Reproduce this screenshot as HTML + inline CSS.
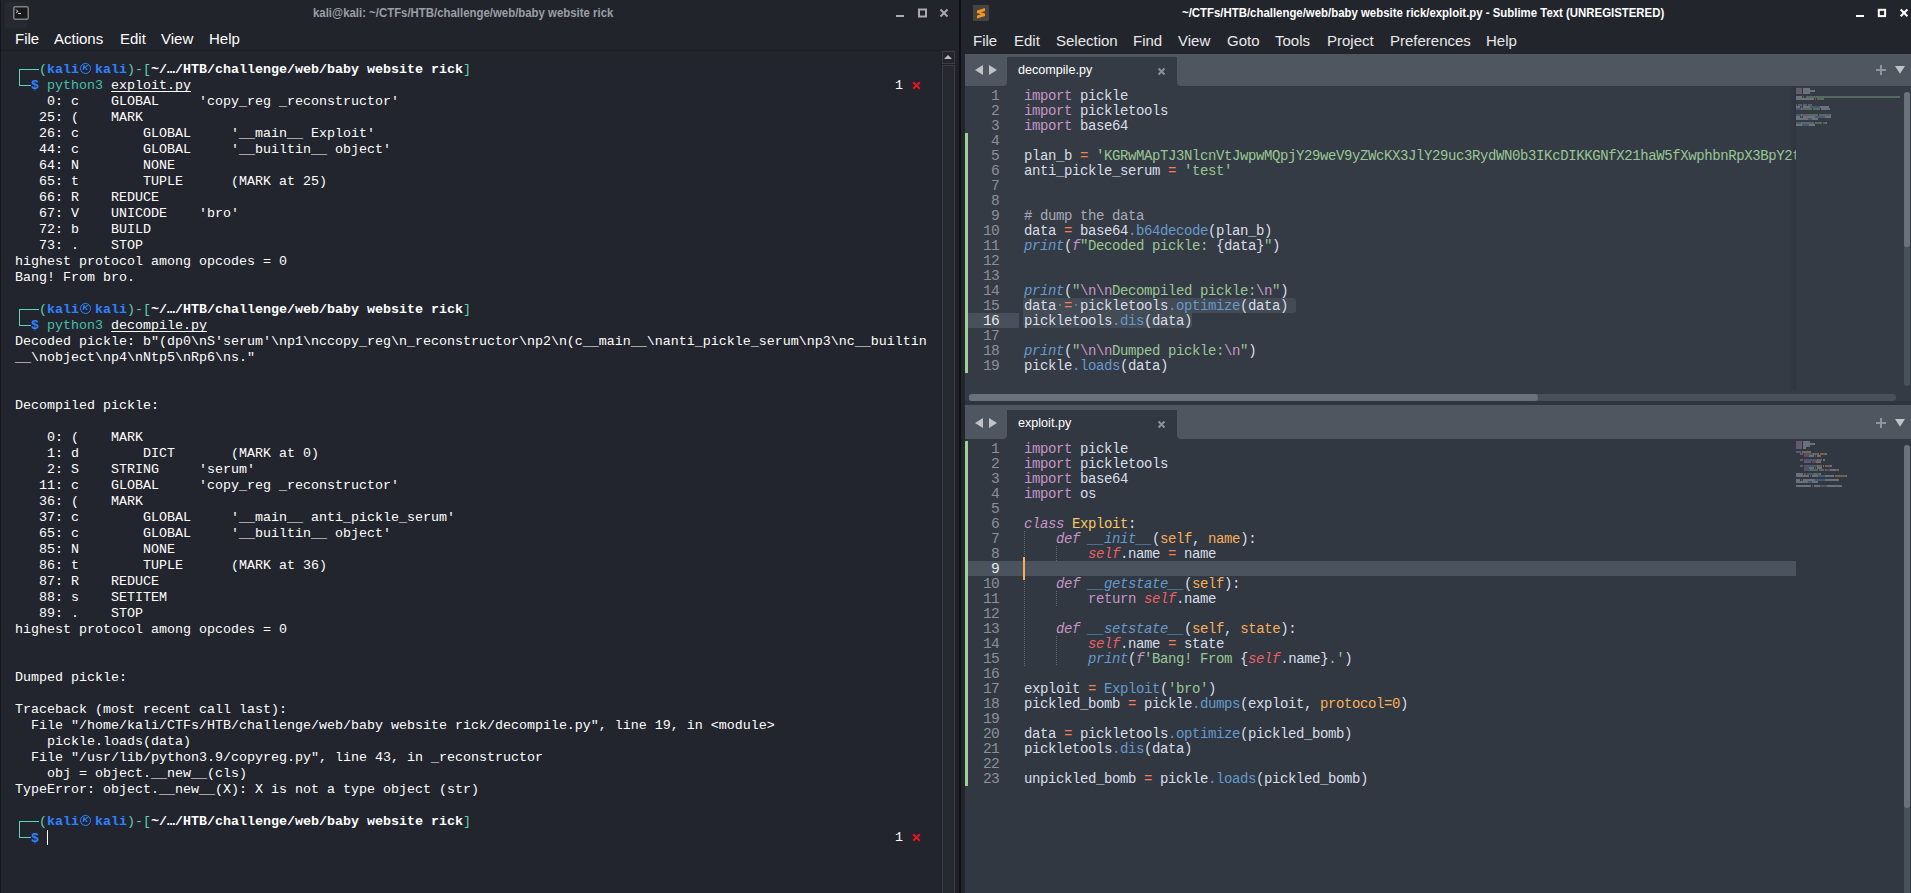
<!DOCTYPE html>
<html><head><meta charset="utf-8">
<style>
*{box-sizing:border-box}
html,body{margin:0;padding:0}
body{width:1911px;height:893px;overflow:hidden;position:relative;background:#101114;font-family:"Liberation Sans",sans-serif}
.abs{position:absolute}
/* terminal */
#term{position:absolute;left:0;top:0;width:959px;height:893px;background:#23252e}
.tl{position:absolute;left:15px;height:16px;line-height:16px;white-space:pre;font-family:"Liberation Mono",monospace;font-size:13.33px;color:#fff}
.tl b{font-weight:bold}
.rp{left:895px}
.tl u{text-decoration:underline;text-underline-offset:1.5px;text-decoration-skip-ink:none}
.ko{display:inline-block;width:16px;height:16px;vertical-align:top;position:relative}
.ko::before{content:"";box-sizing:border-box;position:absolute;left:0.5px;top:0.5px;width:11.8px;height:11.8px;border:1.6px solid #2f82ff;border-radius:50%}
.ko::after{content:"K";position:absolute;left:3.4px;top:1.2px;font-size:8px;line-height:10px;color:#2f82ff;font-family:"Liberation Sans",sans-serif;font-weight:bold}
.bx{position:absolute;background:#5ed6b2}
.cur{display:inline-block;width:1px;height:15px;background:#fff;vertical-align:-3px}
.mi{position:absolute;font-size:15px;color:#fff;top:30px;line-height:18px}
.wt{position:absolute;font-weight:bold;font-size:13px;line-height:16px;top:5px;white-space:pre;transform:scaleX(0.877);transform-origin:0 0}
/* sublime */
.tabt{position:absolute;left:1018px;font-size:12.6px;color:#fff;line-height:16px}
.ln{position:absolute;left:965px;width:34px;text-align:right;font-family:"Liberation Mono",monospace;font-size:14.6px;letter-spacing:-0.75px;line-height:15px;height:15px;color:#8a9099;margin-top:1px}
.ln.hl{color:#e6e9ee}
.cl{position:absolute;left:1024px;white-space:pre;font-family:"Liberation Mono",monospace;font-size:14px;letter-spacing:-0.4px;line-height:15px;height:15px;color:#d8dee9;margin-top:1px}
.kw{color:#c695c6}.kwi{color:#c695c6;font-style:italic}.op{color:#f97b58}.st{color:#99c794}.fn{color:#6699cc}.fni{color:#6699cc;font-style:italic}.cm{color:#a6acb9}
.sf{color:#ec5f66;font-style:italic}.pa{color:#f9ae58}.cn{color:#fac761}.es{color:#c695c6}
.clip{position:absolute;overflow:hidden}
.mm i{position:absolute;height:2px;opacity:0.34}
.guide{position:absolute;width:1px;background-image:linear-gradient(#5f6771 50%,transparent 50%);background-size:1px 2px}
</style></head><body>
<!-- ================= TERMINAL ================= -->
<div id="term">
  <div class="abs" style="left:0;top:0;width:959px;height:50px;background:#22242c"></div>
  <div class="abs" style="left:0;top:50px;width:941px;height:1px;background:#1c1e24"></div>
  <div class="abs" style="left:0;top:0;width:1px;height:893px;background:#15161a"></div>
  <!-- icon -->
  <div class="abs" style="left:5px;top:2px;width:22px;height:26px;background:#272931;border-radius:3px"></div>
  <svg class="abs" style="left:13px;top:6px" width="16" height="14" viewBox="0 0 16 14">
    <rect x="0.75" y="0.75" width="14.5" height="12.5" rx="1.5" fill="#1a1a1a" stroke="#808080" stroke-width="1.5"/>
    <path d="M3 3.5L5 5.5L3 6.5M5 7.5H8" stroke="#dcdcdc" stroke-width="1" fill="none"/>
  </svg>
  <div class="wt" style="left:313px;color:#9a9ea6">kali@kali: ~/CTFs/HTB/challenge/web/baby website rick</div>
  <!-- window buttons -->
  <svg class="abs" style="left:890px;top:4px" width="64" height="18" viewBox="0 0 64 18">
    <rect x="6" y="11" width="8" height="2" fill="#ababab"/>
    <rect x="29" y="5.5" width="7" height="7" fill="none" stroke="#ababab" stroke-width="2"/>
    <path d="M50.5 5.5L57.5 12.5M57.5 5.5L50.5 12.5" stroke="#ababab" stroke-width="2"/>
  </svg>
  <div class="mi" style="left:15px">File</div>
  <div class="mi" style="left:54px">Actions</div>
  <div class="mi" style="left:120px">Edit</div>
  <div class="mi" style="left:161px">View</div>
  <div class="mi" style="left:209px">Help</div>
  <!-- scrollbar -->
  <div class="abs" style="left:941px;top:51px;width:18px;height:842px;background:#202228"></div>
  <div class="abs" style="left:942px;top:51px;width:13px;height:13px;border:1px solid #3a3d45;background:#23252c"></div>
  <div class="abs" style="left:944px;top:55px;width:0;height:0;border-left:4px solid transparent;border-right:4px solid transparent;border-bottom:4px solid #bcbcbc"></div>
  <div class="abs" style="left:942px;top:65px;width:13px;height:840px;border:1px solid #3a3d45;background:#262930"></div>
<div class="bx" style="left:19px;top:69px;width:20px;height:1px"></div><div class="bx" style="left:19px;top:69px;width:1px;height:17px"></div><div class="bx" style="left:19px;top:85px;width:12px;height:1px"></div><div class="bx" style="left:19px;top:309px;width:20px;height:1px"></div><div class="bx" style="left:19px;top:309px;width:1px;height:17px"></div><div class="bx" style="left:19px;top:325px;width:12px;height:1px"></div><div class="bx" style="left:19px;top:821px;width:20px;height:1px"></div><div class="bx" style="left:19px;top:821px;width:1px;height:17px"></div><div class="bx" style="left:19px;top:837px;width:12px;height:1px"></div><div class="tl" style="top:62px"><span style="color:#5ad2ac">   (</span><b style="color:#2f82ff">kali<i class="ko"></i>kali</b><span style="color:#5ad2ac">)-[</span><b style="color:#ffffff">~/…/HTB/challenge/web/baby website rick</b><span style="color:#5ad2ac">]</span></div>
<div class="tl" style="top:78px"><span style="color:#5ad2ac">  </span><b style="color:#2f82ff">$</b> <span style="color:#47bfac">python3</span> <u>exploit.py</u></div>
<div class="tl" style="top:94px">    0: c    GLOBAL     &#x27;copy_reg _reconstructor&#x27;</div>
<div class="tl" style="top:110px">   25: (    MARK</div>
<div class="tl" style="top:126px">   26: c        GLOBAL     &#x27;__main__ Exploit&#x27;</div>
<div class="tl" style="top:142px">   44: c        GLOBAL     &#x27;__builtin__ object&#x27;</div>
<div class="tl" style="top:158px">   64: N        NONE</div>
<div class="tl" style="top:174px">   65: t        TUPLE      (MARK at 25)</div>
<div class="tl" style="top:190px">   66: R    REDUCE</div>
<div class="tl" style="top:206px">   67: V    UNICODE    &#x27;bro&#x27;</div>
<div class="tl" style="top:222px">   72: b    BUILD</div>
<div class="tl" style="top:238px">   73: .    STOP</div>
<div class="tl" style="top:254px">highest protocol among opcodes = 0</div>
<div class="tl" style="top:270px">Bang! From bro.</div>
<div class="tl" style="top:302px"><span style="color:#5ad2ac">   (</span><b style="color:#2f82ff">kali<i class="ko"></i>kali</b><span style="color:#5ad2ac">)-[</span><b style="color:#ffffff">~/…/HTB/challenge/web/baby website rick</b><span style="color:#5ad2ac">]</span></div>
<div class="tl" style="top:318px"><span style="color:#5ad2ac">  </span><b style="color:#2f82ff">$</b> <span style="color:#47bfac">python3</span> <u>decompile.py</u></div>
<div class="tl" style="top:334px">Decoded pickle: b&quot;(dp0\nS&#x27;serum&#x27;\np1\nccopy_reg\n_reconstructor\np2\n(c__main__\nanti_pickle_serum\np3\nc__builtin</div>
<div class="tl" style="top:350px">__\nobject\np4\nNtp5\nRp6\ns.&quot;</div>
<div class="tl" style="top:398px">Decompiled pickle:</div>
<div class="tl" style="top:430px">    0: (    MARK</div>
<div class="tl" style="top:446px">    1: d        DICT       (MARK at 0)</div>
<div class="tl" style="top:462px">    2: S    STRING     &#x27;serum&#x27;</div>
<div class="tl" style="top:478px">   11: c    GLOBAL     &#x27;copy_reg _reconstructor&#x27;</div>
<div class="tl" style="top:494px">   36: (    MARK</div>
<div class="tl" style="top:510px">   37: c        GLOBAL     &#x27;__main__ anti_pickle_serum&#x27;</div>
<div class="tl" style="top:526px">   65: c        GLOBAL     &#x27;__builtin__ object&#x27;</div>
<div class="tl" style="top:542px">   85: N        NONE</div>
<div class="tl" style="top:558px">   86: t        TUPLE      (MARK at 36)</div>
<div class="tl" style="top:574px">   87: R    REDUCE</div>
<div class="tl" style="top:590px">   88: s    SETITEM</div>
<div class="tl" style="top:606px">   89: .    STOP</div>
<div class="tl" style="top:622px">highest protocol among opcodes = 0</div>
<div class="tl" style="top:670px">Dumped pickle:</div>
<div class="tl" style="top:702px">Traceback (most recent call last):</div>
<div class="tl" style="top:718px">  File &quot;/home/kali/CTFs/HTB/challenge/web/baby website rick/decompile.py&quot;, line 19, in &lt;module&gt;</div>
<div class="tl" style="top:734px">    pickle.loads(data)</div>
<div class="tl" style="top:750px">  File &quot;/usr/lib/python3.9/copyreg.py&quot;, line 43, in _reconstructor</div>
<div class="tl" style="top:766px">    obj = object.__new__(cls)</div>
<div class="tl" style="top:782px">TypeError: object.__new__(X): X is not a type object (str)</div>
<div class="tl" style="top:814px"><span style="color:#5ad2ac">   (</span><b style="color:#2f82ff">kali<i class="ko"></i>kali</b><span style="color:#5ad2ac">)-[</span><b style="color:#ffffff">~/…/HTB/challenge/web/baby website rick</b><span style="color:#5ad2ac">]</span></div>
<div class="tl" style="top:830px"><span style="color:#5ad2ac">  </span><b style="color:#2f82ff">$</b> <i class="cur"></i></div><div class="tl rp" style="top:78px"><span style="color:#fff">1</span></div><svg class="abs" style="left:912px;top:81px" width="9" height="9" viewBox="0 0 9 9"><path d="M1.2 1.2L7.8 7.8M7.8 1.2L1.2 7.8" stroke="#e8141c" stroke-width="2"/></svg><div class="tl rp" style="top:830px"><span style="color:#fff">1</span></div><svg class="abs" style="left:912px;top:833px" width="9" height="9" viewBox="0 0 9 9"><path d="M1.2 1.2L7.8 7.8M7.8 1.2L1.2 7.8" stroke="#e8141c" stroke-width="2"/></svg>
</div>
<div class="abs" style="left:959px;top:0;width:2px;height:893px;background:#0f1013"></div>

<!-- ================= SUBLIME ================= -->
<div class="abs" style="left:961px;top:0;width:950px;height:893px;background:#23252d"></div>
<div class="abs" style="left:973px;top:5px;width:16px;height:16px;background:#444444;border-radius:1px"></div>
<svg class="abs" style="left:973px;top:5px" width="16" height="16" viewBox="0 0 16 16">
  <path d="M4 5.5L12 3V6L8 7.3L12 8.5V11L4 13.5V10.5L8 9.2L4 8Z" fill="#f7941d"/>
</svg>
<div class="wt" style="left:1182px;color:#ffffff">~/CTFs/HTB/challenge/web/baby website rick/exploit.py - Sublime Text (UNREGISTERED)</div>
<svg class="abs" style="left:1850px;top:4px" width="61" height="18" viewBox="0 0 61 18">
  <rect x="6" y="11" width="8" height="2" fill="#fff"/>
  <rect x="28.8" y="5.8" width="6.3" height="6.3" fill="none" stroke="#fff" stroke-width="2"/>
  <path d="M50.7 5.6L57.4 12.3M57.4 5.6L50.7 12.3" stroke="#fff" stroke-width="2.1"/>
</svg>
<div class="mi" style="left:973px;top:32px;color:#e8e8e8">File</div>
<div class="mi" style="left:1014px;top:32px;color:#e8e8e8">Edit</div>
<div class="mi" style="left:1056px;top:32px;color:#e8e8e8">Selection</div>
<div class="mi" style="left:1133px;top:32px;color:#e8e8e8">Find</div>
<div class="mi" style="left:1178px;top:32px;color:#e8e8e8">View</div>
<div class="mi" style="left:1227px;top:32px;color:#e8e8e8">Goto</div>
<div class="mi" style="left:1275px;top:32px;color:#e8e8e8">Tools</div>
<div class="mi" style="left:1327px;top:32px;color:#e8e8e8">Project</div>
<div class="mi" style="left:1390px;top:32px;color:#e8e8e8">Preferences</div>
<div class="mi" style="left:1486px;top:32px;color:#e8e8e8">Help</div>

<!-- ---------- pane 1 ---------- -->
<div class="abs" style="left:965px;top:54px;width:946px;height:351px;background:#353b45"></div>
<div class="abs" style="left:965px;top:54px;width:42px;height:32px;background:#4f565f;border-bottom-right-radius:4px"></div>
<div class="abs" style="left:1177px;top:54px;width:734px;height:32px;background:#4f565f;border-bottom-left-radius:4px"></div>
<div class="abs" style="left:1007px;top:54px;width:170px;height:3px;background:#4f565f"></div>
<div class="abs" style="left:1007px;top:57px;width:170px;height:29px;background:#353b45;border-radius:5px 5px 0 0"></div>
<svg class="abs" style="left:965px;top:54px" width="946" height="32" viewBox="0 0 946 32">
  <path d="M10 16L18 11V21Z" fill="#c0c3c7"/>
  <path d="M24 11L32 16L24 21Z" fill="#c0c3c7"/>
  <path d="M193.5 14.5L199.5 20.5M199.5 14.5L193.5 20.5" stroke="#8a9098" stroke-width="2"/>
  <path d="M916 11V21M911 16H921" stroke="#8f959c" stroke-width="2"/>
  <path d="M930 12H940L935 19.8Z" fill="#c0c3c7"/>
</svg>
<div class="tabt" style="top:62px">decompile.py</div>
<!-- selection & highlights -->
<div class="abs" style="left:968px;top:313px;width:51px;height:15px;background:#48515b"></div>
<div class="abs" style="left:1023px;top:298px;width:273px;height:15px;background:#434b55;border-radius:3px 3px 3px 0"></div>
<div class="abs" style="left:1023px;top:313px;width:169px;height:15px;background:#434b55;border-radius:0 0 3px 3px"></div>
<div class="abs" style="left:965px;top:133px;width:3px;height:240px;background:#9fcf95"></div>
<div class="abs" style="left:1059px;top:304px;width:2px;height:2px;background:#6a737e"></div>
<div class="abs" style="left:1075px;top:304px;width:2px;height:2px;background:#6a737e"></div>
<div class="clip" style="left:965px;top:86px;width:831px;height:305px">
  <div class="abs" style="left:-965px;top:-86px;width:1911px;height:893px">
<div class="ln" style="top:88px">1</div>
<div class="cl" style="top:88px"><span class="kw">import</span> pickle</div>
<div class="ln" style="top:103px">2</div>
<div class="cl" style="top:103px"><span class="kw">import</span> pickletools</div>
<div class="ln" style="top:118px">3</div>
<div class="cl" style="top:118px"><span class="kw">import</span> base64</div>
<div class="ln" style="top:133px">4</div>
<div class="ln" style="top:148px">5</div>
<div class="cl" style="top:148px">plan_b <span class="op">=</span> <span class="st">&#x27;KGRwMApTJ3NlcnVtJwpwMQpjY29weV9yZWcKX3JlY29uc3RydWN0b3IKcDIKKGNfX21haW5fXwphbnRpX3BpY2tsZV9zZXJ1bQpwMwpjX19idWlsdGluX18Kb2JqZWN0CnA0Ck50cDUKUnA2CnMu&#x27;</span></div>
<div class="ln" style="top:163px">6</div>
<div class="cl" style="top:163px">anti_pickle_serum <span class="op">=</span> <span class="st">&#x27;test&#x27;</span></div>
<div class="ln" style="top:178px">7</div>
<div class="ln" style="top:193px">8</div>
<div class="ln" style="top:208px">9</div>
<div class="cl" style="top:208px"><span class="cm"># dump the data</span></div>
<div class="ln" style="top:223px">10</div>
<div class="cl" style="top:223px">data <span class="op">=</span> base64<span class="fn">.b64decode</span>(plan_b)</div>
<div class="ln" style="top:238px">11</div>
<div class="cl" style="top:238px"><span class="fni">print</span>(<span class="kwi">f</span><span class="st">&quot;Decoded pickle: </span>{data}<span class="st">&quot;</span>)</div>
<div class="ln" style="top:253px">12</div>
<div class="ln" style="top:268px">13</div>
<div class="ln" style="top:283px">14</div>
<div class="cl" style="top:283px"><span class="fni">print</span>(<span class="st">&quot;</span><span class="es">\n\n</span><span class="st">Decompiled pickle:</span><span class="es">\n</span><span class="st">&quot;</span>)</div>
<div class="ln" style="top:298px">15</div>
<div class="cl" style="top:298px">data <span class="op">=</span> pickletools<span class="fn">.optimize</span>(data)</div>
<div class="ln hl" style="top:313px">16</div>
<div class="cl" style="top:313px">pickletools<span class="fn">.dis</span>(data)</div>
<div class="ln" style="top:328px">17</div>
<div class="ln" style="top:343px">18</div>
<div class="cl" style="top:343px"><span class="fni">print</span>(<span class="st">&quot;</span><span class="es">\n\n</span><span class="st">Dumped pickle:</span><span class="es">\n</span><span class="st">&quot;</span>)</div>
<div class="ln" style="top:358px">19</div>
<div class="cl" style="top:358px">pickle<span class="fn">.loads</span>(data)</div>
  </div>
</div>
<div class="abs" style="left:1790px;top:86px;width:6px;height:304px;background:linear-gradient(90deg,rgba(0,0,0,0.02),rgba(0,0,0,0.12))"></div>
<div class="mm"><i style="left:1796.00px;top:88px;width:6.36px;background:#c695c6"></i><i style="left:1803.42px;top:88px;width:6.36px;background:#d8dee9"></i><i style="left:1796.00px;top:90px;width:6.36px;background:#c695c6"></i><i style="left:1803.42px;top:90px;width:11.66px;background:#d8dee9"></i><i style="left:1796.00px;top:92px;width:6.36px;background:#c695c6"></i><i style="left:1803.42px;top:92px;width:6.36px;background:#d8dee9"></i><i style="left:1796.00px;top:96px;width:6.36px;background:#d8dee9"></i><i style="left:1803.42px;top:96px;width:1.06px;background:#f97b58"></i><i style="left:1805.54px;top:96px;width:94.46px;background:#99c794"></i><i style="left:1796.00px;top:98px;width:18.02px;background:#d8dee9"></i><i style="left:1815.08px;top:98px;width:1.06px;background:#f97b58"></i><i style="left:1817.20px;top:98px;width:6.36px;background:#99c794"></i><i style="left:1796.00px;top:104px;width:1.06px;background:#a6acb9"></i><i style="left:1798.12px;top:104px;width:4.24px;background:#a6acb9"></i><i style="left:1803.42px;top:104px;width:3.18px;background:#a6acb9"></i><i style="left:1807.66px;top:104px;width:4.24px;background:#a6acb9"></i><i style="left:1796.00px;top:106px;width:4.24px;background:#d8dee9"></i><i style="left:1801.30px;top:106px;width:1.06px;background:#f97b58"></i><i style="left:1803.42px;top:106px;width:6.36px;background:#d8dee9"></i><i style="left:1809.78px;top:106px;width:10.60px;background:#6699cc"></i><i style="left:1820.38px;top:106px;width:8.48px;background:#d8dee9"></i><i style="left:1796.00px;top:108px;width:5.30px;background:#6699cc"></i><i style="left:1801.30px;top:108px;width:1.06px;background:#d8dee9"></i><i style="left:1802.36px;top:108px;width:1.06px;background:#c695c6"></i><i style="left:1803.42px;top:108px;width:8.48px;background:#99c794"></i><i style="left:1812.96px;top:108px;width:7.42px;background:#99c794"></i><i style="left:1821.44px;top:108px;width:6.36px;background:#d8dee9"></i><i style="left:1827.80px;top:108px;width:1.06px;background:#99c794"></i><i style="left:1828.86px;top:108px;width:1.06px;background:#d8dee9"></i><i style="left:1796.00px;top:114px;width:5.30px;background:#6699cc"></i><i style="left:1801.30px;top:114px;width:1.06px;background:#d8dee9"></i><i style="left:1802.36px;top:114px;width:1.06px;background:#99c794"></i><i style="left:1803.42px;top:114px;width:4.24px;background:#c695c6"></i><i style="left:1807.66px;top:114px;width:10.60px;background:#99c794"></i><i style="left:1819.32px;top:114px;width:7.42px;background:#99c794"></i><i style="left:1826.74px;top:114px;width:2.12px;background:#c695c6"></i><i style="left:1828.86px;top:114px;width:1.06px;background:#99c794"></i><i style="left:1829.92px;top:114px;width:1.06px;background:#d8dee9"></i><i style="left:1796.00px;top:116px;width:4.24px;background:#d8dee9"></i><i style="left:1801.30px;top:116px;width:1.06px;background:#f97b58"></i><i style="left:1803.42px;top:116px;width:11.66px;background:#d8dee9"></i><i style="left:1815.08px;top:116px;width:9.54px;background:#6699cc"></i><i style="left:1824.62px;top:116px;width:6.36px;background:#d8dee9"></i><i style="left:1796.00px;top:118px;width:11.66px;background:#d8dee9"></i><i style="left:1807.66px;top:118px;width:4.24px;background:#6699cc"></i><i style="left:1811.90px;top:118px;width:6.36px;background:#d8dee9"></i><i style="left:1796.00px;top:122px;width:5.30px;background:#6699cc"></i><i style="left:1801.30px;top:122px;width:1.06px;background:#d8dee9"></i><i style="left:1802.36px;top:122px;width:1.06px;background:#99c794"></i><i style="left:1803.42px;top:122px;width:4.24px;background:#c695c6"></i><i style="left:1807.66px;top:122px;width:6.36px;background:#99c794"></i><i style="left:1815.08px;top:122px;width:7.42px;background:#99c794"></i><i style="left:1822.50px;top:122px;width:2.12px;background:#c695c6"></i><i style="left:1824.62px;top:122px;width:1.06px;background:#99c794"></i><i style="left:1825.68px;top:122px;width:1.06px;background:#d8dee9"></i><i style="left:1796.00px;top:124px;width:6.36px;background:#d8dee9"></i><i style="left:1802.36px;top:124px;width:6.36px;background:#6699cc"></i><i style="left:1808.72px;top:124px;width:6.36px;background:#d8dee9"></i></div>
<div class="abs" style="left:1904px;top:92px;width:6px;height:294px;background:#48505a;border-radius:3px"></div>
<div class="abs" style="left:1904px;top:92px;width:6px;height:155px;background:#6b727b;border-radius:3px"></div>
<div class="abs" style="left:969px;top:394px;width:927px;height:7px;background:#48505a;border-radius:3px"></div>
<div class="abs" style="left:969px;top:394px;width:569px;height:7px;background:#6b717b;border-radius:3px"></div>
<div class="abs" style="left:965px;top:401px;width:946px;height:4px;background:#2f353e"></div>

<!-- ---------- pane 2 ---------- -->
<div class="abs" style="left:965px;top:405px;width:946px;height:488px;background:#313842"></div>
<div class="abs" style="left:965px;top:405px;width:42px;height:34px;background:#4f565f;border-bottom-right-radius:4px"></div>
<div class="abs" style="left:1177px;top:405px;width:734px;height:34px;background:#4f565f;border-bottom-left-radius:4px"></div>
<div class="abs" style="left:1007px;top:405px;width:170px;height:5px;background:#4f565f"></div>
<div class="abs" style="left:1007px;top:410px;width:170px;height:29px;background:#313842;border-radius:5px 5px 0 0"></div>
<svg class="abs" style="left:965px;top:407px" width="946" height="32" viewBox="0 0 946 32">
  <path d="M10 16L18 11V21Z" fill="#c0c3c7"/>
  <path d="M24 11L32 16L24 21Z" fill="#c0c3c7"/>
  <path d="M193.5 14.5L199.5 20.5M199.5 14.5L193.5 20.5" stroke="#8a9098" stroke-width="2"/>
  <path d="M916 11V21M911 16H921" stroke="#8f959c" stroke-width="2"/>
  <path d="M930 12H940L935 19.8Z" fill="#c0c3c7"/>
</svg>
<div class="tabt" style="top:415px">exploit.py</div>
<div class="abs" style="left:968px;top:561px;width:828px;height:15px;background:#4a535e"></div>
<div class="abs" style="left:965px;top:441px;width:3px;height:345px;background:#9fcf95"></div>
<div class="guide" style="left:1024px;top:531px;height:135px"></div>
<div class="guide" style="left:1056px;top:546px;height:15px"></div>
<div class="guide" style="left:1056px;top:591px;height:15px"></div>
<div class="guide" style="left:1056px;top:636px;height:30px"></div>
<div class="clip" style="left:965px;top:439px;width:831px;height:454px">
  <div class="abs" style="left:-965px;top:-439px;width:1911px;height:893px">
<div class="ln" style="top:441px">1</div>
<div class="cl" style="top:441px"><span class="kw">import</span> pickle</div>
<div class="ln" style="top:456px">2</div>
<div class="cl" style="top:456px"><span class="kw">import</span> pickletools</div>
<div class="ln" style="top:471px">3</div>
<div class="cl" style="top:471px"><span class="kw">import</span> base64</div>
<div class="ln" style="top:486px">4</div>
<div class="cl" style="top:486px"><span class="kw">import</span> os</div>
<div class="ln" style="top:501px">5</div>
<div class="ln" style="top:516px">6</div>
<div class="cl" style="top:516px"><span class="kwi">class</span> <span class="cn">Exploit</span>:</div>
<div class="ln" style="top:531px">7</div>
<div class="cl" style="top:531px">    <span class="kwi">def</span> <span class="fni">__init__</span>(<span class="pa">self</span>, <span class="pa">name</span>):</div>
<div class="ln" style="top:546px">8</div>
<div class="cl" style="top:546px">        <span class="sf">self</span>.name <span class="op">=</span> name</div>
<div class="ln hl" style="top:561px">9</div>
<div class="ln" style="top:576px">10</div>
<div class="cl" style="top:576px">    <span class="kwi">def</span> <span class="fni">__getstate__</span>(<span class="pa">self</span>):</div>
<div class="ln" style="top:591px">11</div>
<div class="cl" style="top:591px">        <span class="kw">return</span> <span class="sf">self</span>.name</div>
<div class="ln" style="top:606px">12</div>
<div class="ln" style="top:621px">13</div>
<div class="cl" style="top:621px">    <span class="kwi">def</span> <span class="fni">__setstate__</span>(<span class="pa">self</span>, <span class="pa">state</span>):</div>
<div class="ln" style="top:636px">14</div>
<div class="cl" style="top:636px">        <span class="sf">self</span>.name <span class="op">=</span> state</div>
<div class="ln" style="top:651px">15</div>
<div class="cl" style="top:651px">        <span class="fni">print</span>(<span class="kwi">f</span><span class="st">&#x27;Bang! From </span>{<span class="sf">self</span>.name}<span class="st">.&#x27;</span>)</div>
<div class="ln" style="top:666px">16</div>
<div class="ln" style="top:681px">17</div>
<div class="cl" style="top:681px">exploit <span class="op">=</span> <span class="fn">Exploit</span>(<span class="st">&#x27;bro&#x27;</span>)</div>
<div class="ln" style="top:696px">18</div>
<div class="cl" style="top:696px">pickled_bomb <span class="op">=</span> pickle<span class="fn">.dumps</span>(exploit, <span class="pa">protocol=0</span>)</div>
<div class="ln" style="top:711px">19</div>
<div class="ln" style="top:726px">20</div>
<div class="cl" style="top:726px">data <span class="op">=</span> pickletools<span class="fn">.optimize</span>(pickled_bomb)</div>
<div class="ln" style="top:741px">21</div>
<div class="cl" style="top:741px">pickletools<span class="fn">.dis</span>(data)</div>
<div class="ln" style="top:756px">22</div>
<div class="ln" style="top:771px">23</div>
<div class="cl" style="top:771px">unpickled_bomb <span class="op">=</span> pickle<span class="fn">.loads</span>(pickled_bomb)</div>
  </div>
</div>
<div class="abs" style="left:1023px;top:557px;width:2px;height:23px;background:#f9ae58"></div>
<div class="mm"><i style="left:1796.00px;top:441px;width:6.36px;background:#c695c6"></i><i style="left:1803.42px;top:441px;width:6.36px;background:#d8dee9"></i><i style="left:1796.00px;top:443px;width:6.36px;background:#c695c6"></i><i style="left:1803.42px;top:443px;width:11.66px;background:#d8dee9"></i><i style="left:1796.00px;top:445px;width:6.36px;background:#c695c6"></i><i style="left:1803.42px;top:445px;width:6.36px;background:#d8dee9"></i><i style="left:1796.00px;top:447px;width:6.36px;background:#c695c6"></i><i style="left:1803.42px;top:447px;width:2.12px;background:#d8dee9"></i><i style="left:1796.00px;top:451px;width:5.30px;background:#c695c6"></i><i style="left:1802.36px;top:451px;width:7.42px;background:#fac761"></i><i style="left:1809.78px;top:451px;width:1.06px;background:#d8dee9"></i><i style="left:1800.24px;top:453px;width:3.18px;background:#c695c6"></i><i style="left:1804.48px;top:453px;width:8.48px;background:#6699cc"></i><i style="left:1812.96px;top:453px;width:1.06px;background:#d8dee9"></i><i style="left:1814.02px;top:453px;width:4.24px;background:#f9ae58"></i><i style="left:1818.26px;top:453px;width:1.06px;background:#d8dee9"></i><i style="left:1820.38px;top:453px;width:4.24px;background:#f9ae58"></i><i style="left:1824.62px;top:453px;width:2.12px;background:#d8dee9"></i><i style="left:1804.48px;top:455px;width:4.24px;background:#ec5f66"></i><i style="left:1808.72px;top:455px;width:5.30px;background:#d8dee9"></i><i style="left:1815.08px;top:455px;width:1.06px;background:#f97b58"></i><i style="left:1817.20px;top:455px;width:4.24px;background:#d8dee9"></i><i style="left:1800.24px;top:459px;width:3.18px;background:#c695c6"></i><i style="left:1804.48px;top:459px;width:12.72px;background:#6699cc"></i><i style="left:1817.20px;top:459px;width:1.06px;background:#d8dee9"></i><i style="left:1818.26px;top:459px;width:4.24px;background:#f9ae58"></i><i style="left:1822.50px;top:459px;width:2.12px;background:#d8dee9"></i><i style="left:1804.48px;top:461px;width:6.36px;background:#c695c6"></i><i style="left:1811.90px;top:461px;width:4.24px;background:#ec5f66"></i><i style="left:1816.14px;top:461px;width:5.30px;background:#d8dee9"></i><i style="left:1800.24px;top:465px;width:3.18px;background:#c695c6"></i><i style="left:1804.48px;top:465px;width:12.72px;background:#6699cc"></i><i style="left:1817.20px;top:465px;width:1.06px;background:#d8dee9"></i><i style="left:1818.26px;top:465px;width:4.24px;background:#f9ae58"></i><i style="left:1822.50px;top:465px;width:1.06px;background:#d8dee9"></i><i style="left:1824.62px;top:465px;width:5.30px;background:#f9ae58"></i><i style="left:1829.92px;top:465px;width:2.12px;background:#d8dee9"></i><i style="left:1804.48px;top:467px;width:4.24px;background:#ec5f66"></i><i style="left:1808.72px;top:467px;width:5.30px;background:#d8dee9"></i><i style="left:1815.08px;top:467px;width:1.06px;background:#f97b58"></i><i style="left:1817.20px;top:467px;width:5.30px;background:#d8dee9"></i><i style="left:1804.48px;top:469px;width:5.30px;background:#6699cc"></i><i style="left:1809.78px;top:469px;width:1.06px;background:#d8dee9"></i><i style="left:1810.84px;top:469px;width:1.06px;background:#c695c6"></i><i style="left:1811.90px;top:469px;width:6.36px;background:#99c794"></i><i style="left:1819.32px;top:469px;width:4.24px;background:#99c794"></i><i style="left:1824.62px;top:469px;width:1.06px;background:#d8dee9"></i><i style="left:1825.68px;top:469px;width:4.24px;background:#ec5f66"></i><i style="left:1829.92px;top:469px;width:6.36px;background:#d8dee9"></i><i style="left:1836.28px;top:469px;width:2.12px;background:#99c794"></i><i style="left:1838.40px;top:469px;width:1.06px;background:#d8dee9"></i><i style="left:1796.00px;top:473px;width:7.42px;background:#d8dee9"></i><i style="left:1804.48px;top:473px;width:1.06px;background:#f97b58"></i><i style="left:1806.60px;top:473px;width:7.42px;background:#6699cc"></i><i style="left:1814.02px;top:473px;width:1.06px;background:#d8dee9"></i><i style="left:1815.08px;top:473px;width:5.30px;background:#99c794"></i><i style="left:1820.38px;top:473px;width:1.06px;background:#d8dee9"></i><i style="left:1796.00px;top:475px;width:12.72px;background:#d8dee9"></i><i style="left:1809.78px;top:475px;width:1.06px;background:#f97b58"></i><i style="left:1811.90px;top:475px;width:6.36px;background:#d8dee9"></i><i style="left:1818.26px;top:475px;width:6.36px;background:#6699cc"></i><i style="left:1824.62px;top:475px;width:9.54px;background:#d8dee9"></i><i style="left:1835.22px;top:475px;width:10.60px;background:#f9ae58"></i><i style="left:1845.82px;top:475px;width:1.06px;background:#d8dee9"></i><i style="left:1796.00px;top:479px;width:4.24px;background:#d8dee9"></i><i style="left:1801.30px;top:479px;width:1.06px;background:#f97b58"></i><i style="left:1803.42px;top:479px;width:11.66px;background:#d8dee9"></i><i style="left:1815.08px;top:479px;width:9.54px;background:#6699cc"></i><i style="left:1824.62px;top:479px;width:14.84px;background:#d8dee9"></i><i style="left:1796.00px;top:481px;width:11.66px;background:#d8dee9"></i><i style="left:1807.66px;top:481px;width:4.24px;background:#6699cc"></i><i style="left:1811.90px;top:481px;width:6.36px;background:#d8dee9"></i><i style="left:1796.00px;top:485px;width:14.84px;background:#d8dee9"></i><i style="left:1811.90px;top:485px;width:1.06px;background:#f97b58"></i><i style="left:1814.02px;top:485px;width:6.36px;background:#d8dee9"></i><i style="left:1820.38px;top:485px;width:6.36px;background:#6699cc"></i><i style="left:1826.74px;top:485px;width:14.84px;background:#d8dee9"></i></div>
<div class="abs" style="left:1904px;top:445px;width:6px;height:460px;background:#48505a;border-radius:3px"></div>
<div class="abs" style="left:1904px;top:445px;width:6px;height:363px;background:#6b727b;border-radius:3px"></div>
</body></html>
